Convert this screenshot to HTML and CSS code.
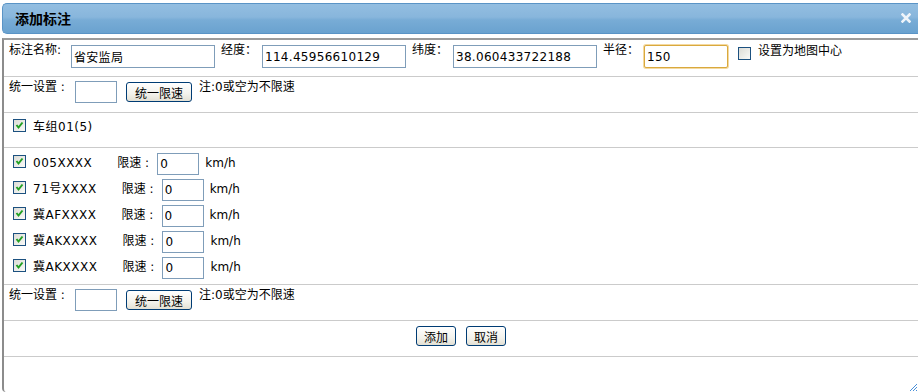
FILE: index.html
```html
<!DOCTYPE html>
<html>
<head>
  <meta charset="utf-8">
  <title>添加标注</title>
  <link rel="stylesheet" href="styles.css">
</head>
<body>
  <div class="dialog">
    <div class="titlebar">
      <span class="title">添加标注</span>
      <svg class="close" width="10" height="10" viewBox="0 0 10 10"><path d="M1.5 1.5 L8.5 8.5 M8.5 1.5 L1.5 8.5" stroke="#eef4fa" stroke-width="2.6" stroke-linecap="square"/></svg>
    </div>
    <div class="panel">
      <div class="row row-top">
        <span class="lbl first">标注名称:</span><input class="txt wide" value="省安监局">
        <span class="lbl">经度：</span><input class="txt wide" value="114.45956610129">
        <span class="lbl">纬度：</span><input class="txt wide" value="38.060433722188">
        <span class="lbl">半径：</span><input class="txt mid focus" value="150">
        <span class="chk"></span><span class="chk-text">设置为地图中心</span>
      </div>
      <div class="row row-set">
        <span class="set-lbl">统一设置 :</span><input class="txt small">
        <button class="btn btn-set">统一限速</button>
        <span class="note">注:0或空为不限速</span>
      </div>
      <div class="row row-group">
        <span class="chk on"><svg width="11" height="11" viewBox="0 0 11 11"><path d="M2.5 5 L4.5 7.5 L8.5 2.5" fill="none" stroke="#22a022" stroke-width="2"/></svg></span>
        <span class="name">车组01(5)</span>
      </div>
      <div class="row row-cars">
        <div class="car">
          <span class="chk on"><svg width="11" height="11" viewBox="0 0 11 11"><path d="M2.5 5 L4.5 7.5 L8.5 2.5" fill="none" stroke="#22a022" stroke-width="2"/></svg></span>
          <span class="name">005XXXX</span><span class="speed">限速 :</span><input class="txt small" value="0"><span class="unit">km/h</span>
        </div>
        <div class="car">
          <span class="chk on"><svg width="11" height="11" viewBox="0 0 11 11"><path d="M2.5 5 L4.5 7.5 L8.5 2.5" fill="none" stroke="#22a022" stroke-width="2"/></svg></span>
          <span class="name">71号XXXX</span><span class="speed">限速 :</span><input class="txt small" value="0"><span class="unit">km/h</span>
        </div>
        <div class="car">
          <span class="chk on"><svg width="11" height="11" viewBox="0 0 11 11"><path d="M2.5 5 L4.5 7.5 L8.5 2.5" fill="none" stroke="#22a022" stroke-width="2"/></svg></span>
          <span class="name">冀AFXXXX</span><span class="speed">限速 :</span><input class="txt small" value="0"><span class="unit">km/h</span>
        </div>
        <div class="car">
          <span class="chk on"><svg width="11" height="11" viewBox="0 0 11 11"><path d="M2.5 5 L4.5 7.5 L8.5 2.5" fill="none" stroke="#22a022" stroke-width="2"/></svg></span>
          <span class="name">冀AKXXXX</span><span class="speed">限速 :</span><input class="txt small" value="0"><span class="unit">km/h</span>
        </div>
        <div class="car">
          <span class="chk on"><svg width="11" height="11" viewBox="0 0 11 11"><path d="M2.5 5 L4.5 7.5 L8.5 2.5" fill="none" stroke="#22a022" stroke-width="2"/></svg></span>
          <span class="name">冀AKXXXX</span><span class="speed">限速 :</span><input class="txt small" value="0"><span class="unit">km/h</span>
        </div>
      </div>
      <div class="row row-set">
        <span class="set-lbl">统一设置 :</span><input class="txt small">
        <button class="btn btn-set">统一限速</button>
        <span class="note">注:0或空为不限速</span>
      </div>
      <div class="row row-btns">
        <button class="btn btn-act">添加</button>
        <button class="btn btn-act">取消</button>
      </div>
      <svg class="grip" width="9" height="9" viewBox="0 0 9 9"><path d="M8 1 L1 8 M8 4 L4 8 M8 7 L7 8" stroke="#4a90d9" stroke-width="1"/></svg>
    </div>
  </div>
</body>
</html>
```
FILE: styles.css
```css
* {
  margin: 0;
  padding: 0;
  box-sizing: border-box;
}

html, body {
  height: 100%;
  overflow: hidden;
  background: #fff;
}

body {
  font-family: "DejaVu Sans", "Noto Sans CJK SC", sans-serif;
  font-size: 12px;
  color: #000;
}

.dialog {
  margin-left: 2px;
  width: calc(100% - 2px);
  height: 100%;
  display: flex;
  flex-direction: column;
}

.titlebar {
  margin-top: 3px;
  height: 31px;
  border: 1px solid #5a94c6;
  border-right: none;
  border-radius: 5px 0 0 5px;
  background: linear-gradient(#93bee1 0%, #88b6dc 45%, #78acd6 55%, #6aa2cf 100%);
  display: flex;
  align-items: center;
  justify-content: space-between;
  padding: 0 7px 1px 12px;
}

.title {
  font-size: 14px;
  font-weight: bold;
  font-family: "Noto Sans CJK SC", sans-serif;
}

.close {
  display: block;
}

.panel {
  margin-top: 4px;
  flex: 1;
  border-top: 2px solid #9c9c9c;
  border-left: 2px solid #8c8c8c;
  border-bottom-left-radius: 4px;
  position: relative;
}

.row {
  border-bottom: 1px solid #cbcbcb;
  display: flex;
  align-items: flex-start;
  padding-left: 5px;
}

.row-top {
  height: 37px;
  padding-top: 5px;
}

.row-set {
  height: 36px;
  padding-top: 4px;
}

.row-group {
  height: 35px;
  padding-top: 6px;
  padding-left: 9px;
}

.row-cars {
  height: 137px;
  padding-top: 5px;
  padding-left: 9px;
  flex-direction: column;
}

.row-btns {
  height: 36px;
  padding: 5px 0 0;
  justify-content: center;
  gap: 10px;
}

.lbl {
  width: 47px;
  padding-left: 6px;
  line-height: 14px;
  margin-top: -2px;
}

.lbl.first {
  width: 62px;
  padding-left: 0;
}

.txt {
  height: 23px;
  border: 1px solid #7f9db9;
  font-family: "DejaVu Sans", "Noto Sans CJK SC", sans-serif;
  font-size: 12px;
  letter-spacing: 0.3px;
  padding: 0 2px;
  outline: none;
  color: #000;
}

.wide {
  width: 144px;
}

.mid {
  width: 84px;
}

.focus {
  border: 1px solid #d9a93e;
  box-shadow: 0 0 0 1px #f4d9a0;
  border-radius: 2px;
}

.small {
  width: 42px;
  height: 22px;
}

.chk {
  width: 13px;
  height: 13px;
  border: 1px solid #1c5180;
  background: linear-gradient(135deg, #dcdcd6, #fafaf8);
  display: flex;
  align-items: center;
  justify-content: center;
  flex: none;
}

.row-top .chk {
  margin-left: 10px;
  margin-top: 2px;
}

.chk-text {
  margin-left: 7px;
  margin-top: -1px;
  line-height: 14px;
}

.set-lbl {
  width: 66px;
  line-height: 13px;
}

.btn {
  height: 20px;
  border: 1px solid #003c74;
  border-radius: 3px;
  background: linear-gradient(#ffffff, #f3f2ec 60%, #e3e0d4);
  font-family: "Noto Sans CJK SC", sans-serif;
  font-size: 12px;
  padding: 0 5px;
  line-height: 17px;
  color: #000;
}

.btn-set {
  width: 66px;
  margin-left: 9px;
  margin-top: 1px;
}

.btn-act {
  width: 40px;
}

.note {
  margin-left: 7px;
  line-height: 13px;
}

.name {
  margin-left: 7px;
  line-height: 14px;
  letter-spacing: 0.5px;
}

.row-group .name {
  margin-top: 1px;
}

.car {
  display: flex;
  align-items: flex-start;
  height: 26px;
}

.car .chk {
  margin-top: 2px;
}

.car .name {
  margin-top: 3px;
}

.speed {
  margin-left: 25px;
  width: 40px;
  margin-top: 3px;
  line-height: 14px;
}

.unit {
  margin-left: 6px;
  margin-top: 3px;
  line-height: 14px;
}

.grip {
  position: absolute;
  right: 0;
  bottom: 0;
}
```
